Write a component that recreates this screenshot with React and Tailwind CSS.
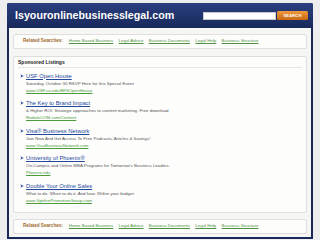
import React from "react";

const related = ["Home Based Business", "Legal Advice", "Business Documents", "Legal Help", "Business Structure"];

const listings = [
  { t: "USF Open House", d: "Saturday, October 30 RSVP Here for this Special Event", u: "www.USF.ca.edu/BFSOpenHouse" },
  { t: "The Key to Brand Impact", d: "& Higher ROI. Strategic approaches to content marketing. Free download", u: "RodaleCOM.com/Content" },
  { t: "Visa\u00AE Business Network", d: "Join Now And Get Access To Free Podcasts, Articles & Savings!", u: "www.VisaBusinessNetwork.com" },
  { t: "University of Phoenix\u00AE", d: "On-Campus and Online MBA Programs for Tomorrow's Business Leaders.", u: "Phoenix.edu" },
  { t: "Double Your Online Sales", d: "What to do. When to do it. And how. Within your budget.", u: "www.SpitfirePromotionGroup.com" },
];

function Related() {
  return (
    <div className="h-[15px] shrink-0 flex items-center pl-[9px] bg-[#fdfdfc] border border-[#dedede] rounded-[2px]">
      <span className="text-[4.6px] font-bold text-[#a0692a] mr-[6px]">Related Searches:</span>
      {related.map((r) => (
        <span key={r} className="text-[4.4px] text-[#4f9140] underline mr-[5.3px]">{r}</span>
      ))}
    </div>
  );
}

function Arrow() {
  return (
    <svg width="4" height="4" viewBox="0 0 4 4" className="block">
      <path d="M0.3 0.3 L3.7 2 L0.3 3.7 L1.3 2 Z" fill="#2d4f9e" />
    </svg>
  );
}

export default function App() {
  return (
    <div className="w-[320px] h-[240px] bg-[#eeeeee] pt-[3px] pl-[7px] font-['Liberation_Sans',Arial,sans-serif] overflow-hidden">
      <div className="w-[306px] h-[236px] bg-[#18295a] flex flex-col rounded-t-[2px]">
        <div className="h-[25px] shrink-0 flex items-center pl-[8px] pr-[5px] bg-linear-to-b from-[#2b4080] to-[#17285a] rounded-t-[2px]">
          <span className="text-[10.7px] font-bold text-white leading-none">Isyouronlinebusinesslegal.com</span>
          <div className="ml-auto flex items-center gap-[1px]">
            <div className="w-[73px] h-[8px] bg-white border border-[#c8c8c8]" />
            <div className="w-[31px] h-[9px] rounded-[1.5px] bg-linear-to-b from-[#f09a3c] to-[#c9680f] flex items-center justify-center">
              <span className="text-[4px] font-bold text-white leading-none tracking-[0.2px]">SEARCH</span>
            </div>
          </div>
        </div>
        <div className="flex-1 mx-[2px] mb-[2px] bg-[#f6f6f4] px-[4px] pt-[6px] pb-[3px] flex flex-col">
          <Related />
          <div className="flex-1 mt-[7px] mb-[6px] bg-[#fdfdfc] border border-[#dedede] rounded-[2px] px-[4px] pt-[1px]">
            <div className="h-[8px] leading-[8px] text-[5px] font-bold text-[#222]">Sponsored Listings</div>
            <div className="h-[2px] border-b border-[#e6e6e6]" />
            <div className="mt-[3.6px] flex flex-col gap-[5.6px]">
              {listings.map((l) => (
                <div key={l.t} className="flex">
                  <div className="w-[8px] shrink-0 pt-[2px] pl-[2px]">
                    <Arrow />
                  </div>
                  <div className="flex flex-col">
                    <div className="h-[8px] leading-[8px] text-[5.8px] text-[#23479a] underline whitespace-nowrap">{l.t}</div>
                    <div className="h-[7px] leading-[7px] text-[4.4px] text-[#555] whitespace-nowrap">{l.d}</div>
                    <div className="h-[7px] leading-[7px] text-[4.4px] text-[#4a9a3a] underline whitespace-nowrap">{l.u}</div>
                  </div>
                </div>
              ))}
            </div>
          </div>
          <Related />
        </div>
      </div>
    </div>
  );
}
